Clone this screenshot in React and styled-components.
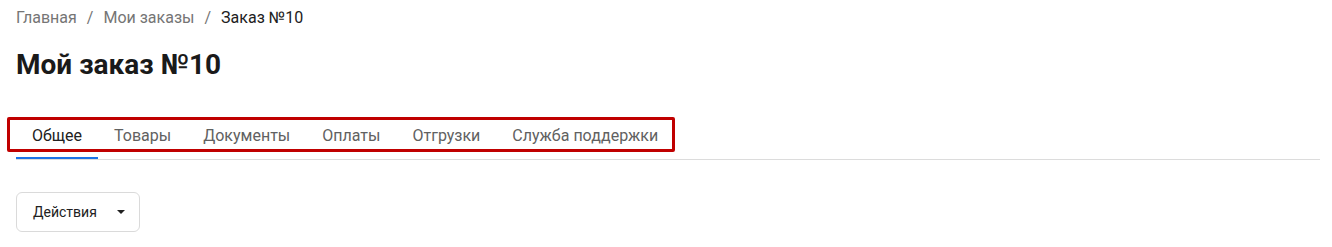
import styled, { createGlobalStyle } from "styled-components"

const GlobalStyle = createGlobalStyle`
  * {
    box-sizing: border-box;
  }
  body {
    margin: 0;
    background: #fff;
    font-family: Roboto, "Liberation Sans", sans-serif;
    color: #212121;
  }
`

const Page = styled.div`
  padding: 8px 12px 0 16px;
`

const Breadcrumbs = styled.nav`
  display: flex;
  align-items: center;
  font-size: 16px;
  line-height: 20px;
`

const Crumb = styled.a`
  color: ${(props) => (props.$current ? "#212121" : "#757575")};
  text-decoration: none;
`

const Separator = styled.span`
  color: #757575;
  margin: 0 10px;
`

const Title = styled.h1`
  margin: 20px 0 0;
  font-size: 28px;
  font-weight: 700;
  line-height: 34px;
  color: #1a1a1a;
`

const TabsBar = styled.div`
  margin-top: 35px;
  border-bottom: 1px solid #dcdcdc;
`

const TabList = styled.div`
  position: relative;
  display: inline-flex;
`

const Tab = styled.button`
  height: 42px;
  padding: 0 16px 4px;
  border: none;
  border-bottom: 2px solid ${(props) => (props.$active ? "#1a73e8" : "transparent")};
  background: none;
  font-family: inherit;
  font-size: 16px;
  color: ${(props) => (props.$active ? "#212121" : "#616161")};
  cursor: pointer;
`

const Highlight = styled.div`
  position: absolute;
  top: 0;
  left: -9px;
  right: -1px;
  height: 35px;
  border: 3px solid #c00000;
  border-radius: 2px;
  pointer-events: none;
`

const Actions = styled.button`
  margin-top: 32px;
  display: inline-flex;
  align-items: center;
  gap: 20px;
  height: 40px;
  padding: 0 14px 0 16px;
  border: 1px solid #dadada;
  border-radius: 6px;
  background: #fff;
  font-family: inherit;
  font-size: 14px;
  color: #212121;
`

const Caret = styled.span`
  width: 0;
  height: 0;
  border-left: 4px solid transparent;
  border-right: 4px solid transparent;
  border-top: 4px solid #212121;
`

const tabs = ["Общее", "Товары", "Документы", "Оплаты", "Отгрузки", "Служба поддержки"]

const App = () => {
  return (
    <Page>
      <GlobalStyle />
      <Breadcrumbs>
        <Crumb href="#">Главная</Crumb>
        <Separator>/</Separator>
        <Crumb href="#">Мои заказы</Crumb>
        <Separator>/</Separator>
        <Crumb $current>Заказ №10</Crumb>
      </Breadcrumbs>
      <Title>Мой заказ №10</Title>
      <TabsBar>
        <TabList>
          {tabs.map((t, i) => (
            <Tab key={t} $active={i === 0}>
              {t}
            </Tab>
          ))}
          <Highlight />
        </TabList>
      </TabsBar>
      <Actions>
        Действия
        <Caret />
      </Actions>
    </Page>
  )
}

export default App
